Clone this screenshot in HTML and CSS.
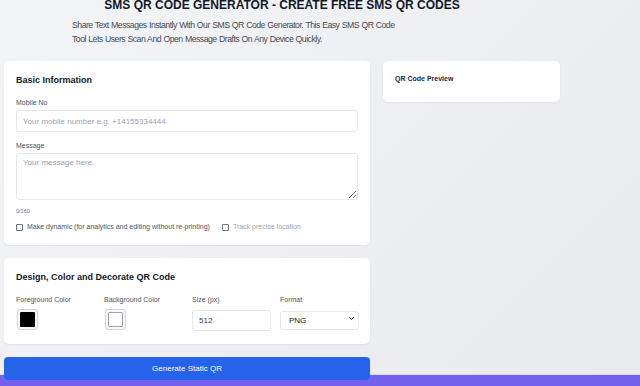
FILE: index.html
```html
<!DOCTYPE html>
<html lang="en">
<head>
<meta charset="UTF-8">
<meta name="viewport" content="width=device-width, initial-scale=1.0">
<title>SMS QR Code Generator</title>
<link rel="stylesheet" href="styles.css">
</head>
<body>
  <div class="page">
    <header class="intro">
      <h1 class="intro-title">SMS QR Code Generator - Create Free SMS QR Codes</h1>
      <p class="intro-text">Share Text Messages Instantly With Our SMS QR Code Generator. This Easy SMS QR Code Tool Lets Users Scan And Open Message Drafts On Any Device Quickly.</p>
    </header>

    <div class="layout">
      <div class="main-col">
        <section class="card">
          <h2 class="card-title">Basic Information</h2>
          <label class="field-label" for="mobile">Mobile No</label>
          <input id="mobile" class="text-input" type="text" placeholder="Your mobile number e.g. +14155334444">
          <label class="field-label" for="message">Message</label>
          <textarea id="message" class="text-area" placeholder="Your message here."></textarea>
          <div class="counter">0/160</div>
          <div class="options">
            <label class="check"><input type="checkbox"> Make dynamic (for analytics and editing without re-printing)</label>
            <label class="check muted"><input type="checkbox"> Track precise location</label>
          </div>
        </section>

        <section class="card">
          <h2 class="card-title">Design, Color and Decorate QR Code</h2>
          <div class="design-grid">
            <div class="design-field">
              <span class="field-label">Foreground Color</span>
              <span class="swatch"><span class="swatch-fill black"></span></span>
            </div>
            <div class="design-field">
              <span class="field-label">Background Color</span>
              <span class="swatch"><span class="swatch-fill white"></span></span>
            </div>
            <div class="design-field">
              <span class="field-label">Size (px)</span>
              <input class="text-input small" type="text" value="512">
            </div>
            <div class="design-field">
              <span class="field-label">Format</span>
              <div class="select-wrap">
                <select class="select">
                  <option>PNG</option>
                  <option>SVG</option>
                  <option>JPG</option>
                </select>
                <svg class="chevron" viewBox="0 0 10 6" fill="none">
                  <polyline points="1,1 5,5 9,1" stroke="#222" stroke-width="1.8" stroke-linecap="round" stroke-linejoin="round"/>
                </svg>
              </div>
            </div>
          </div>
        </section>

        <button class="generate-btn">Generate Static QR</button>
      </div>

      <aside class="side-col">
        <section class="card preview-card">
          <h3 class="preview-title">QR Code Preview</h3>
        </section>
      </aside>
    </div>
  </div>
  <div class="bottom-bar"></div>
</body>
</html>
```

FILE: styles.css
```css
html, body {
  margin: 0;
  padding: 0;
  height: 100%;
  overflow: hidden;
}
body {
  background: linear-gradient(135deg, #f3f4f6 0%, #e8eaee 100%);
  font-family: "Liberation Sans", Arial, sans-serif;
  color: #374151;
}
.page {
  width: 556px;
  padding: 0 4px;
}
.intro-title {
  margin: -2px 0 0 0;
  font-size: 12px;
  line-height: 14px;
  font-weight: 700;
  text-transform: uppercase;
  text-align: center;
  color: #111827;
}
.intro-text {
  margin: 7px 0 0 68px;
  width: 332px;
  font-size: 8.7px;
  letter-spacing: -0.5px;
  word-spacing: 0.4px;
  line-height: 13.5px;
  color: #444b57;
}
.layout {
  display: grid;
  grid-template-columns: 366px 177px;
  gap: 13px;
  margin-top: 15px;
  align-items: start;
}
.main-col {
  display: flex;
  flex-direction: column;
  gap: 13px;
}
.card {
  background: #fff;
  border-radius: 5px;
  box-shadow: 0 1px 2px rgba(0, 0, 0, 0.06);
  padding: 13px 12px 13px 12px;
  display: flex;
  flex-direction: column;
}
.card-title {
  margin: 0 0 13px 0;
  font-size: 9px;
  line-height: 12px;
  font-weight: 700;
  color: #111827;
}
.field-label {
  display: block;
  font-size: 7px;
  line-height: 8px;
  color: #4b5563;
  margin-bottom: 3px;
}
.text-input {
  box-sizing: border-box;
  width: 100%;
  height: 22px;
  border: 1px solid #e5e7eb;
  border-radius: 3px;
  padding: 0 6px;
  font-family: "Liberation Sans", Arial, sans-serif;
  font-size: 8px;
  color: #374151;
  outline: none;
  margin-bottom: 10px;
}
.text-input::placeholder,
.text-area::placeholder {
  color: #9ca3af;
}
.text-area {
  box-sizing: border-box;
  width: 100%;
  height: 47px;
  border: 1px solid #e5e7eb;
  border-radius: 3px;
  padding: 4px 6px;
  font-family: "Liberation Sans", Arial, sans-serif;
  font-size: 8px;
  color: #374151;
  outline: none;
  display: block;
  resize: vertical;
  margin: 0;
}
.counter {
  font-size: 5.5px;
  line-height: 8px;
  color: #6b7280;
  margin-top: 7px;
}
.options {
  display: flex;
  gap: 12px;
  margin-top: 7px;
}
.check {
  display: flex;
  align-items: center;
  gap: 4px;
  font-size: 7px;
  line-height: 10px;
  color: #4b5563;
}
.check.muted {
  color: #9ca3af;
}
.check input {
  appearance: none;
  margin: 0;
  width: 7px;
  height: 7px;
  border: 1px solid #6b7280;
  border-radius: 1px;
  box-sizing: border-box;
  background: #fff;
}
.design-grid {
  display: grid;
  grid-template-columns: repeat(4, 79px);
  gap: 9px;
  align-items: start;
  margin-bottom: 0;
}
.design-field .field-label {
  margin-bottom: 5px;
}
.swatch {
  display: block;
  box-sizing: border-box;
  width: 21px;
  height: 21px;
  margin-left: 1px;
  padding: 2px;
  border: 1px solid #d1d5db;
  border-radius: 3px;
  background: #f9fafb;
}
.swatch-fill {
  display: block;
  width: 100%;
  height: 100%;
  border-radius: 1px;
}
.swatch-fill.black {
  background: #000;
}
.swatch-fill.white {
  background: #fff;
  border: 1px solid #9ca3af;
  box-sizing: border-box;
}
.text-input.small {
  height: 21px;
  margin: 0;
}
.select-wrap {
  position: relative;
}
.select {
  appearance: none;
  box-sizing: border-box;
  width: 100%;
  height: 19px;
  border: 1px solid #e5e7eb;
  border-radius: 3px;
  padding: 0 8px;
  background: #fff;
  font-family: "Liberation Sans", Arial, sans-serif;
  font-size: 8px;
  color: #222;
  outline: none;
}
.chevron {
  position: absolute;
  right: 5px;
  top: 8px;
  width: 5px;
  height: 3px;
  pointer-events: none;
}
.generate-btn {
  position: relative;
  z-index: 2;
  height: 23px;
  border: none;
  border-radius: 4px;
  background: #2563eb;
  color: #fff;
  font-family: "Liberation Sans", Arial, sans-serif;
  font-size: 8px;
  cursor: pointer;
}
.preview-card {
  height: 41px;
  box-sizing: border-box;
  padding: 13px 12px;
}
.preview-title {
  margin: 0;
  font-size: 7px;
  line-height: 9px;
  font-weight: 700;
  color: #1f2937;
}
.bottom-bar {
  position: fixed;
  left: 0;
  right: 0;
  bottom: 0;
  height: 11px;
  background: #7461ee;
  border-top: 1px solid #d9dcf5;
  z-index: 1;
}
```
